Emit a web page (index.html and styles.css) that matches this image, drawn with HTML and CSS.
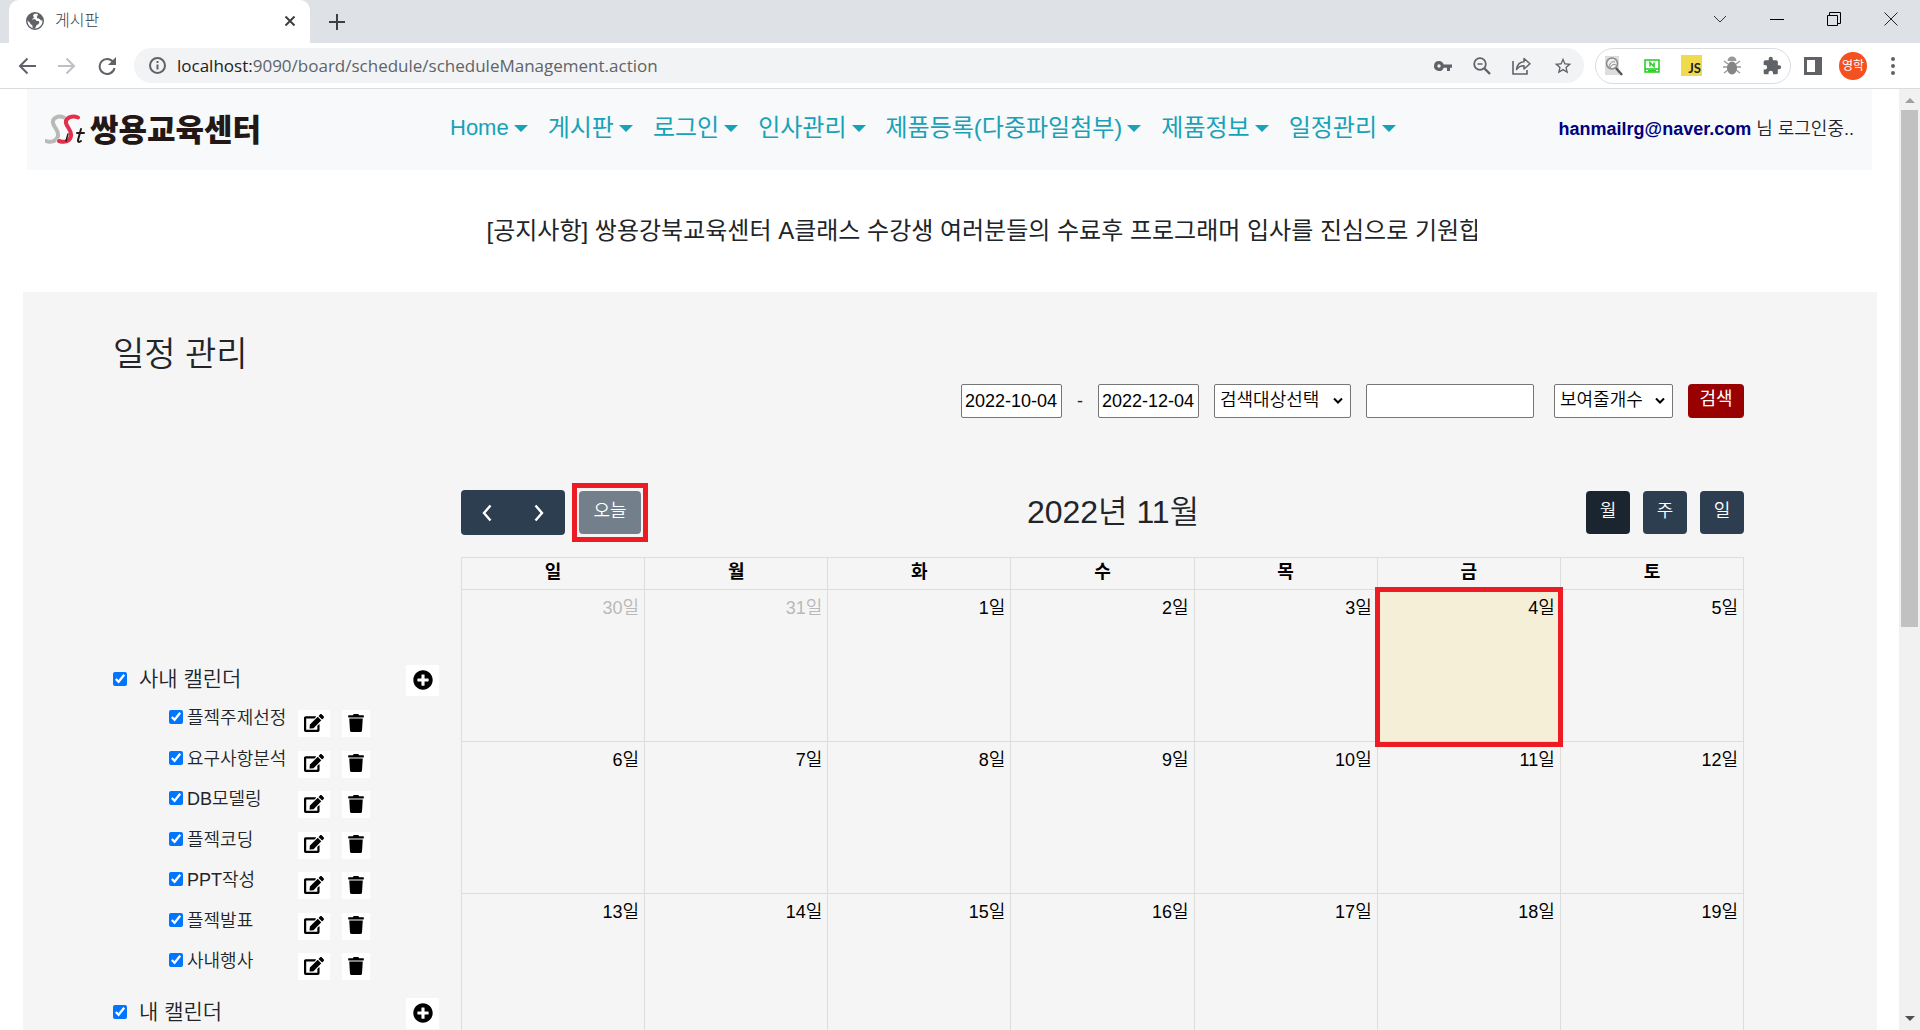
FILE: index.html
```html
<!DOCTYPE html>
<html lang="ko">
<head>
<meta charset="utf-8">
<title>게시판</title>
<link rel="stylesheet" href="styles.css">
</head>
<body>
<svg class="defs" width="0" height="0" aria-hidden="true">
  <symbol id="i-edit" viewBox="0 0 576 512"><path fill="currentColor" d="M402.600 83.200l90.200 90.200c3.800 3.800 3.800 10 0 13.800L274.400 405.600l-92.800 10.300c-12.400 1.400-22.900-9.100-21.500-21.500l10.300-92.800L388.800 83.200c3.800-3.800 10-3.800 13.800 0zm162-22.900l-48.800-48.800c-15.200-15.200-39.900-15.200-55.200 0l-35.400 35.400c-3.800 3.800-3.800 10 0 13.800l90.200 90.200c3.800 3.800 10 3.800 13.800 0l35.400-35.400c15.200-15.300 15.200-40 0-55.200zM384 346.200V448H64V128h229.800c3.200 0 6.200-1.300 8.500-3.500l40-40c7.600-7.600 2.200-20.500-8.500-20.500H48C21.500 64 0 85.500 0 112v352c0 26.500 21.500 48 48 48h352c26.500 0 48-21.500 48-48V306.200c0-10.700-12.900-16-20.500-8.500l-40 40c-2.200 2.300-3.500 5.300-3.500 8.500z"/></symbol>
  <symbol id="i-trash" viewBox="0 0 448 512"><path fill="currentColor" d="M432 32H312l-9.400-18.700A24 24 0 0 0 281.100 0H166.800a23.700 23.700 0 0 0-21.400 13.300L136 32H16A16 16 0 0 0 0 48v32a16 16 0 0 0 16 16h416a16 16 0 0 0 16-16V48a16 16 0 0 0-16-16zM53.200 467a48 48 0 0 0 47.900 45h245.800a48 48 0 0 0 47.900-45L416 128H32z"/></symbol>
  <symbol id="i-plus" viewBox="0 0 512 512"><path fill="currentColor" d="M256 8C119 8 8 119 8 256s111 248 248 248 248-111 248-248S393 8 256 8zm144 276c0 6.600-5.400 12-12 12h-92v92c0 6.600-5.400 12-12 12h-56c-6.600 0-12-5.400-12-12v-92h-92c-6.600 0-12-5.400-12-12v-56c0-6.600 5.400-12 12-12h92v-92c0-6.600 5.400-12 12-12h56c6.600 0 12 5.400 12 12v92h92c6.600 0 12 5.400 12 12v56z"/></symbol>
</svg>

<header class="browser">
  <div class="tabstrip">
    <div class="tab">
      <svg width="18" height="18" viewBox="0 0 24 24"><circle cx="12" cy="12" r="11" fill="#fff" stroke="#5f6368" stroke-width="2"/><path fill="#5f6368" d="M1 9.500C2 4 7 .5 13 1c-.5 1.500-3.500 2-3.500 3.500S11 6 10.500 7.500 8 8.500 8 9.500s4-.5 5 1 2 1.500 3.500 1.500 1.500 2.500.5 3.500-3 1.500-3.500 3-1.500 3.500-3 4c-1.500 0-2-2-1.800-3.500.2-2-2.700-2-3.200-4S2 12 1 9.500z"/><path fill="#5f6368" d="M16 2c3.500 1.500 6 5 6.500 9-1.500 1-3-.5-4-1.500S15 9 14.500 7.500 16.500 4 16 2z"/></svg>
      <span class="tab-title">게시판</span>
      <button class="chrome-btn" aria-label="탭 닫기"><svg width="12" height="12" viewBox="0 0 12 12"><path d="M1.500 1.500l9 9m0-9l-9 9" stroke="#3c4043" stroke-width="2"/></svg></button>
    </div>
    <button class="chrome-btn newtab" aria-label="새 탭"><svg width="16" height="16" viewBox="0 0 16 16"><path d="M8 0v16M0 8h16" stroke="#3c4043" stroke-width="2"/></svg></button>
    <div class="window-controls">
      <button class="chrome-btn" aria-label="탭 검색"><svg width="14" height="14" viewBox="0 0 14 14"><path d="M1 4l6 6 6-6" fill="none" stroke="#333"/></svg></button>
      <button class="chrome-btn" aria-label="최소화"><svg width="14" height="14" viewBox="0 0 14 14"><path d="M0 7.500h14" stroke="#000"/></svg></button>
      <button class="chrome-btn" aria-label="이전 크기로"><svg width="14" height="14" viewBox="0 0 14 14"><path d="M.5 3.500h10v10H.5zM2.500 3V.5h11v11H11" fill="none" stroke="#000"/></svg></button>
      <button class="chrome-btn" aria-label="닫기"><svg width="14" height="14" viewBox="0 0 14 14"><path d="M.5.5l13 13m0-13l-13 13" stroke="#222"/></svg></button>
    </div>
  </div>
  <div class="toolbar">
    <button class="chrome-btn" aria-label="뒤로"><svg width="18" height="18" viewBox="0 0 18 18"><path d="M18 9H2m7.500-7.500L2 9l7.500 7.500" fill="none" stroke="#5f6368" stroke-width="2"/></svg></button>
    <button class="chrome-btn" aria-label="앞으로"><svg width="18" height="18" viewBox="0 0 18 18"><path d="M0 9h16M8.500 1.500L16 9l-7.500 7.500" fill="none" stroke="#bdc1c6" stroke-width="2"/></svg></button>
    <button class="chrome-btn" aria-label="새로고침"><svg width="18" height="18" viewBox="0 0 18 18"><path d="M15.500 5.500A7.500 7.500 0 1 0 16.500 11" fill="none" stroke="#5f6368" stroke-width="2"/><path d="M18 0v8h-8z" fill="#5f6368"/></svg></button>
    <div class="omnibox">
      <svg width="17" height="17" viewBox="0 0 17 17"><circle cx="8.500" cy="8.500" r="7.500" fill="none" stroke="#5f6368" stroke-width="2"/><path d="M8.500 7.500v5M8.500 4v2" stroke="#5f6368" stroke-width="2"/></svg>
      <span class="url"><b>localhost:</b>9090/board/schedule/scheduleManagement.action</span>
      <svg width="18" height="18" viewBox="0 0 18 18"><path fill-rule="evenodd" fill="#5f6368" d="M5 4a5 5 0 1 0 4.700 6.700H13V14h3v-3.300h2V7.500H9.700A5 5 0 0 0 5 4zm0 3.300a1.700 1.700 0 1 1 0 3.400 1.700 1.700 0 0 1 0-3.400z"/></svg>
      <svg width="18" height="18" viewBox="0 0 18 18"><circle cx="7" cy="7" r="5.800" fill="none" stroke="#5f6368" stroke-width="1.800"/><path d="M4.500 7h5" stroke="#5f6368" stroke-width="1.500"/><path d="M11.500 11.500l5.500 5.500" stroke="#5f6368" stroke-width="2.400"/></svg>
      <svg width="20" height="18" viewBox="0 0 20 18"><path d="M1 4v13h14v-4" fill="none" stroke="#5f6368" stroke-width="1.600"/><path d="M12 1.500v3.200C7 5 5 8.500 4.500 12.500 6.500 9.500 9 8.700 12 8.700V12l6-5.200z" fill="none" stroke="#5f6368" stroke-width="1.500" stroke-linejoin="round"/></svg>
      <svg width="20" height="20" viewBox="0 0 24 24"><path fill="#5f6368" d="M22 9.240l-7.190-.62L12 2 9.190 8.630 2 9.240l5.460 4.730L5.820 21 12 17.270 18.180 21l-1.630-7.030L22 9.240zM12 15.400l-3.760 2.270 1-4.280-3.320-2.880 4.380-.38L12 6.100l1.710 4.040 4.380.38-3.320 2.880 1 4.280L12 15.400z"/></svg>
    </div>
    <div class="extensions">
      <svg width="19" height="20" viewBox="0 0 19 20"><path d="M1 0h14v19H1z" fill="#ddd"/><circle cx="8" cy="7.500" r="5.500" fill="#eee" stroke="#8a8a8a" stroke-width="1.500"/><path d="M5 11c1-5 4-6 6-5M6 12c2-4 4-4 6-3" fill="none" stroke="#888"/><path d="M12 12l6 7" stroke="#555" stroke-width="2.500"/></svg>
      <svg width="16" height="14" viewBox="0 0 16 14"><path d="M1 1h14v9H1zM1 10h14v3H1z" fill="#fff" stroke="#1fce1f" stroke-width="1.500"/><path d="M6 7.500V3.500L10 7.500V3.500" fill="none" stroke="#1fce1f" stroke-width="1.500"/><path d="M4 11h8v1.500H4z" fill="#1fce1f"/></svg>
      <span class="js">JS</span>
      <svg width="18" height="19" viewBox="0 0 18 19"><path d="M1 5l4 3M17 5l-4 3M0 11h5m8 0h5M1 17l4-3m12 3l-4-3" stroke="#999" stroke-width="1.400"/><path d="M4.500 5a4.500 4.500 0 0 1 9 0z" fill="#999"/><ellipse cx="9" cy="12" rx="5" ry="6.500" fill="#858585"/></svg>
      <svg width="20" height="20" viewBox="0 0 24 24"><path fill="#5f6368" d="M20.500 11H19V7c0-1.100-.9-2-2-2h-4V3.500a2.500 2.500 0 0 0-5 0V5H4c-1.100 0-2 .9-2 2v3.800h1.500a2.700 2.700 0 0 1 0 5.400H2V20c0 1.100.9 2 2 2h3.800v-1.500a2.700 2.700 0 0 1 5.400 0V22H17c1.100 0 2-.9 2-2v-4h1.500a2.500 2.500 0 0 0 0-5z"/></svg>
    </div>
    <svg width="18" height="18" viewBox="0 0 18 18"><path d="M1.500 1.500h15v15h-15z" fill="#fff" stroke="#5f6368" stroke-width="3"/><path d="M11 0h7v18h-7z" fill="#5f6368"/></svg>
    <span class="avatar">영학</span>
    <button class="chrome-btn" aria-label="메뉴"><svg width="4" height="18" viewBox="0 0 4 18"><g fill="#5f6368"><circle cx="2" cy="2" r="2"/><circle cx="2" cy="9" r="2"/><circle cx="2" cy="16" r="2"/></g></svg></button>
  </div>
</header>

<div class="viewport">
  <div class="page">
    <nav class="navbar">
      <a class="brand" href="#">
        <svg width="40" height="32" viewBox="0 0 40 32" aria-hidden="true">
          <g fill="none" stroke-linecap="round">
            <path d="M19 3.500C13 1 7 4 8 9c1 5 6 7 5 13-1 5-7 7-12 5" stroke="#b9bab6" stroke-width="4"/>
            <path d="M33 3.500C27 1 20 4 21 9c1 5 6 7 5 13-1 5-6 7-12 5" stroke="#fff" stroke-width="5"/>
            <path d="M33 3.500C27 1 20 4 21 9c1 5 6 7 5 13-1 5-6 7-12 5" stroke="#e2304c" stroke-width="4"/>
            <path d="M23 20l-2 7" stroke="#231815" stroke-width="1.500"/>
            <path d="M36 15l-3 11c-.4 2 1 2.500 3 1M32 19h7" stroke="#231815" stroke-width="2"/>
          </g>
        </svg>
        <span>쌍용교육센터</span>
      </a>
      <ul class="menu">
        <li><a class="latin" href="#">Home</a></li>
        <li><a href="#">게시판</a></li>
        <li><a href="#">로그인</a></li>
        <li><a href="#">인사관리</a></li>
        <li><a href="#">제품등록(다중파일첨부)</a></li>
        <li><a href="#">제품정보</a></li>
        <li><a href="#">일정관리</a></li>
      </ul>
      <p class="login"><strong>hanmailrg@naver.com</strong> 님 로그인중..</p>
    </nav>
    <p class="notice">[공지사항] 쌍용강북교육센터 A클래스 수강생 여러분들의 수료후 프로그래머 입사를 진심으로 기원합</p>

    <main class="schedule">
      <h1>일정 관리</h1>
      <form class="filters">
        <input class="date" type="text" value="2022-10-04" aria-label="시작일">
        <span class="dash">-</span>
        <input class="date" type="text" value="2022-12-04" aria-label="종료일">
        <select class="target" aria-label="검색대상"><option>검색대상선택</option></select>
        <input class="word" type="text" aria-label="검색어">
        <select class="count" aria-label="보여줄개수"><option>보여줄개수</option></select>
        <button class="search" type="button">검색</button>
      </form>
      <div class="columns">
        <aside class="calendars">
          <div class="group">
            <input type="checkbox" id="g1" checked><label for="g1">사내 캘린더</label>
            <button class="icon-btn add" aria-label="추가"><svg width="20" height="20"><use href="#i-plus"/></svg></button>
          </div>
          <ul class="items">
            <li><input type="checkbox" id="c1" checked><label for="c1">플젝주제선정</label><button class="icon-btn edit" aria-label="수정"><svg width="20" height="18"><use href="#i-edit"/></svg></button><button class="icon-btn trash" aria-label="삭제"><svg width="16" height="18"><use href="#i-trash"/></svg></button></li>
            <li><input type="checkbox" id="c2" checked><label for="c2">요구사항분석</label><button class="icon-btn edit" aria-label="수정"><svg width="20" height="18"><use href="#i-edit"/></svg></button><button class="icon-btn trash" aria-label="삭제"><svg width="16" height="18"><use href="#i-trash"/></svg></button></li>
            <li><input type="checkbox" id="c3" checked><label for="c3">DB모델링</label><button class="icon-btn edit" aria-label="수정"><svg width="20" height="18"><use href="#i-edit"/></svg></button><button class="icon-btn trash" aria-label="삭제"><svg width="16" height="18"><use href="#i-trash"/></svg></button></li>
            <li><input type="checkbox" id="c4" checked><label for="c4">플젝코딩</label><button class="icon-btn edit" aria-label="수정"><svg width="20" height="18"><use href="#i-edit"/></svg></button><button class="icon-btn trash" aria-label="삭제"><svg width="16" height="18"><use href="#i-trash"/></svg></button></li>
            <li><input type="checkbox" id="c5" checked><label for="c5">PPT작성</label><button class="icon-btn edit" aria-label="수정"><svg width="20" height="18"><use href="#i-edit"/></svg></button><button class="icon-btn trash" aria-label="삭제"><svg width="16" height="18"><use href="#i-trash"/></svg></button></li>
            <li><input type="checkbox" id="c6" checked><label for="c6">플젝발표</label><button class="icon-btn edit" aria-label="수정"><svg width="20" height="18"><use href="#i-edit"/></svg></button><button class="icon-btn trash" aria-label="삭제"><svg width="16" height="18"><use href="#i-trash"/></svg></button></li>
            <li><input type="checkbox" id="c7" checked><label for="c7">사내행사</label><button class="icon-btn edit" aria-label="수정"><svg width="20" height="18"><use href="#i-edit"/></svg></button><button class="icon-btn trash" aria-label="삭제"><svg width="16" height="18"><use href="#i-trash"/></svg></button></li>
          </ul>
          <div class="group">
            <input type="checkbox" id="g2" checked><label for="g2">내 캘린더</label>
            <button class="icon-btn add" aria-label="추가"><svg width="20" height="20"><use href="#i-plus"/></svg></button>
          </div>
        </aside>
        <section class="calendar">
          <div class="cal-bar">
            <div class="cal-left">
              <div class="pager">
                <button aria-label="이전 달"><svg width="12" height="18" viewBox="0 0 12 18"><path d="M9.500 1.500L3 9l6.500 7.500" fill="none" stroke="#fff" stroke-width="2.400"/></svg></button>
                <button aria-label="다음 달"><svg width="12" height="18" viewBox="0 0 12 18"><path d="M2.500 1.500L9 9l-6.500 7.500" fill="none" stroke="#fff" stroke-width="2.400"/></svg></button>
              </div>
              <div class="framed"><button class="today">오늘</button></div>
            </div>
            <h2>2022년 11월</h2>
            <div class="views"><button class="active">월</button><button>주</button><button>일</button></div>
          </div>
          <table>
            <thead><tr><th>일</th><th>월</th><th>화</th><th>수</th><th>목</th><th>금</th><th>토</th></tr></thead>
            <tbody>
              <tr><td class="other">30일</td><td class="other">31일</td><td>1일</td><td>2일</td><td>3일</td><td class="current">4일</td><td>5일</td></tr>
              <tr><td>6일</td><td>7일</td><td>8일</td><td>9일</td><td>10일</td><td>11일</td><td>12일</td></tr>
              <tr><td>13일</td><td>14일</td><td>15일</td><td>16일</td><td>17일</td><td>18일</td><td>19일</td></tr>
            </tbody>
          </table>
        </section>
      </div>
    </main>
  </div>
  <div class="scrollbar" aria-hidden="true"><i class="arrow up"></i><i class="thumb"></i><i class="arrow down"></i></div>
</div>
</body>
</html>
```
FILE: styles.css
```css
* { box-sizing: border-box; }
body {
  margin: 0;
  height: 100vh;
  display: flex;
  flex-direction: column;
  overflow: hidden;
  background: #fff;
  color: #212529;
  font: 18px/26px "Liberation Sans", "Noto Sans CJK KR", sans-serif;
}
button, input, select { font: inherit; margin: 0; }
button { border: 0; padding: 0; }
ul { list-style: none; margin: 0; padding: 0; }
h1, h2, p { margin: 0; font-weight: 350; }
a { text-decoration: none; }
svg { flex: none; }
.defs { position: absolute; }

/* Browser window */
.tabstrip { display: flex; height: 43px; background: #dee1e6; padding-left: 9px; }
.tab {
  display: flex;
  align-items: center;
  gap: 11px;
  width: 301px;
  padding: 0 14px 2px 17px;
  background: #fff;
  border-radius: 10px 10px 0 0;
}
.tab-title { flex: 1; font-size: 16px; font-weight: 300; color: #3c4043; }
.chrome-btn { display: flex; align-items: center; justify-content: center; background: none; }
.newtab { margin-left: 19px; }
.window-controls { display: flex; gap: 43px; height: 37px; margin-left: auto; padding-right: 22px; }
.toolbar {
  display: flex;
  align-items: center;
  height: 46px;
  padding: 0 25px 0 18px;
  border-bottom: 1px solid #dadce0;
}
.toolbar > .chrome-btn { margin-right: 22px; }
.toolbar > .chrome-btn:last-child { margin-right: 0; }
.omnibox {
  display: flex;
  align-items: center;
  flex: 1;
  gap: 21px;
  height: 35px;
  margin: 0 11px 0 -4px;
  padding: 0 11px 0 15px;
  background: #f1f3f4;
  border-radius: 18px;
}
.url { flex: 1; margin-left: -10px; font-family: "Open Sans", sans-serif; font-size: 17px; color: #5f6368; }
.url b { font-weight: 400; color: #202124; }
.extensions {
  display: flex;
  align-items: center;
  gap: 21px;
  height: 36px;
  padding: 0 8px;
  margin-right: 13px;
  border: 1px solid #dadce0;
  border-radius: 18px;
}
.js { width: 21px; height: 21px; padding: 4px 1px 0 0; background: #f0db4f; color: #222; font: bold 13px/18px Lato, sans-serif; text-align: right; }
.avatar { width: 28px; height: 28px; margin: 0 24px 0 17px; border-radius: 50%; background: #f4511e; color: #fff; font-size: 12px; line-height: 28px; text-align: center; }

/* Page area */
.viewport { display: flex; flex: 1; min-height: 0; }
.page { flex: 1; overflow: hidden; padding: 0 22px 0 23px; }
.scrollbar { display: flex; flex-direction: column; align-items: center; width: 21px; background: #f1f1f1; padding: 9px 0; }
.arrow { border: 5px solid transparent; border-top-width: 0; border-bottom: 5px solid #a0a0a0; }
.arrow.down { margin-top: auto; border-bottom: 0; border-top: 5px solid #505050; }
.thumb { width: 17px; height: 56%; margin-top: 7px; background: #c1c1c1; }

.navbar { display: flex; align-items: center; height: 81px; margin: 0 5px 0 4px; padding: 0 18px; background: #f8f9fa; }
.brand { display: flex; align-items: center; gap: 5px; width: 405px; color: #231815; font-size: 31px; font-weight: 900; line-height: 36px; }
.brand span { padding-top: 3px; }
.menu { display: flex; flex: 1; gap: 20px; padding-bottom: 3px; font-size: 24px; line-height: 32px; }
.menu a { display: flex; align-items: center; gap: 5px; color: #17a2b8; }
.menu .latin { font-size: 22px; }
.menu a::after { content: ""; border: 7px solid transparent; border-top-color: #17a2b8; border-bottom: 0; }
.login { padding-bottom: 2px; }
.login strong { color: #000080; font-weight: 700; }
.notice { width: 990px; margin: 43px 0 0 25%; overflow: hidden; white-space: nowrap; font-size: 24px; font-weight: 400; line-height: 36px; }

.schedule { margin-top: 43px; padding: 40px 133px 0 90px; background: #f5f5f5; }
.schedule h1 { font-size: 34px; line-height: 44px; }
.filters { display: flex; align-items: center; justify-content: flex-end; margin-top: 8px; }
.filters input, .filters select { height: 34px; padding: 0 3px; border: 1px solid #767676; border-radius: 2px; background: #fff; color: #000; }
.filters .date { width: 101px; }
.dash { width: 36px; text-align: center; }
.filters select {
  margin-left: 15px;
  padding: 0 5px 3px;
  font-weight: 350;
  appearance: none;
  background: #fff url("data:image/svg+xml,%3Csvg xmlns='http://www.w3.org/2000/svg' width='12' height='8'%3E%3Cpath d='M2 1.500l4 4 4-4' fill='none' stroke='%23000' stroke-width='2'/%3E%3C/svg%3E") no-repeat right 6px center;
}
.filters .target { width: 137px; }
.filters .word { width: 168px; margin-left: 15px; }
.filters .count { width: 119px; margin-left: 20px; }
.search { width: 56px; height: 34px; margin-left: 15px; padding-bottom: 4px; border-radius: 4px; background: #900; color: #fff; }

.columns { display: flex; margin-top: 65px; }
.calendars { flex: none; width: 348px; padding: 182px 22px 0 0; }
.calendars input { width: 14px; height: 14px; accent-color: #0075ff; }
.group { display: flex; align-items: center; height: 31px; }
.group input, .group label { margin-bottom: 4px; }
.group label { flex: 1; margin-left: 12px; font-size: 21px; font-weight: 350; }
.icon-btn { display: flex; align-items: center; justify-content: center; padding-bottom: 2px; background: #fff; color: #000; }
.add { width: 33px; height: 31px; }
.items { display: flex; flex-direction: column; justify-content: space-between; height: 270px; margin: 14px 0 18px 56px; }
.items li { display: flex; height: 27px; }
.items label { width: 111px; margin: -5px 0 0 4px; font-weight: 350; }
.edit { width: 32px; }
.trash { width: 28px; margin-left: 12px; }

.calendar { flex: 1; min-width: 0; }
.cal-bar { display: flex; justify-content: space-between; height: 59px; }
.cal-left, .views { display: flex; align-items: center; }
.cal-bar button { background: #2c3e50; color: #fff; font-weight: 350; }
.pager { display: flex; }
.pager button { display: flex; align-items: center; justify-content: center; width: 52px; height: 45px; }
.pager button:first-child { border-radius: 4px 0 0 4px; }
.pager button:last-child { border-radius: 0 4px 4px 0; }
.framed { margin-left: 7px; padding: 3px 2px; border: 5px solid #ed1c24; }
.cal-bar .today { display: block; width: 62px; height: 43px; padding-bottom: 4px; border-radius: 4px; background: #73808c; }
.cal-bar h2 { margin-right: 8px; font-size: 32px; line-height: 58px; }
.views { gap: 13px; }
.views button { width: 44px; height: 43px; padding-bottom: 4px; border-radius: 4px; }
.views .active { background: #1a252f; }
table { width: 100%; margin-top: 15px; border-collapse: collapse; table-layout: fixed; color: #000; }
th, td { border: 1px solid #ddd; }
th { height: 32px; padding: 0 0 4px; }
td { position: relative; height: 152px; padding: 5px 5px 0; text-align: right; vertical-align: top; font-weight: 350; }
.other { color: #b9b9b9; }
.current { background: #f5efd7; }
.current::after { content: ""; position: absolute; inset: -3px -3px -6px; border: 5px solid #ed1c24; }
```
